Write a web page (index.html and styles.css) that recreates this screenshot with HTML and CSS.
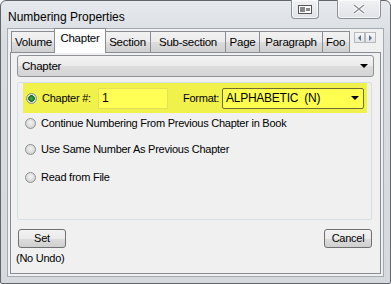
FILE: index.html
```html
<!DOCTYPE html>
<html lang="en">
<head>
  <meta charset="UTF-8">
  <title>Numbering Properties</title>
  <link rel="stylesheet" href="styles.css">
</head>
<body>
  <div class="window">
    <div class="titlebar">
      <span class="title">Numbering Properties</span>
      <div class="caption-btns">
        <div class="cap-btn cap-small">
          <svg width="14" height="9" viewBox="0 0 14 9">
            <rect x="0.5" y="0.5" width="13" height="8" fill="#fff" stroke="#555"/>
            <rect x="2" y="2" width="5" height="5" fill="#888"/>
            <rect x="8" y="3" width="4" height="3" fill="#888"/>
          </svg>
        </div>
        <div class="cap-btn cap-close">
          <svg width="12" height="10" viewBox="0 0 12 10">
            <path d="M1 1 L11 9 M11 1 L1 9" stroke="#fff" stroke-width="3.2"/>
            <path d="M1 1 L11 9 M11 1 L1 9" stroke="#8a8d91" stroke-width="1.4"/>
          </svg>
        </div>
      </div>
    </div>

    <div class="client">
      <div class="tabs">
        <div class="tab" style="width: 45px">Volume</div>
        <div class="tab active" style="width: 46px">Chapter</div>
        <div class="tab" style="width: 47px">Section</div>
        <div class="tab" style="width: 76px">Sub-section</div>
        <div class="tab" style="width: 35px">Page</div>
        <div class="tab" style="width: 64px">Paragraph</div>
        <div class="tab tab-cut" style="width: 28px">Foo</div>
        <div class="tab-arrows">
          <div class="arrow-btn"><span class="tri-left"></span></div>
          <div class="arrow-btn"><span class="tri-right"></span></div>
        </div>
      </div>

      <div class="panel">
        <div class="combo">
          <span>Chapter</span>
          <span class="caret"></span>
        </div>

        <div class="group">
          <div class="highlight">
            <span class="radio checked"></span>
            <span class="label chapter-label">Chapter #:</span>
            <div class="num-input">1</div>
            <span class="format-label">Format:</span>
            <div class="format-select">
              <span>ALPHABETIC&nbsp;&nbsp;(N)</span>
              <span class="caret"></span>
            </div>
          </div>

          <div class="option first">
            <span class="radio"></span>
            <span class="label">Continue Numbering From Previous Chapter in Book</span>
          </div>
          <div class="option second">
            <span class="radio"></span>
            <span class="label">Use Same Number As Previous Chapter</span>
          </div>
          <div class="option third">
            <span class="radio"></span>
            <span class="label">Read from File</span>
          </div>
        </div>

        <div class="footer">
          <div class="set-col">
            <div class="btn">Set</div>
            <div class="note">(No Undo)</div>
          </div>
          <div class="btn">Cancel</div>
        </div>
      </div>
    </div>
  </div>
</body>
</html>
```

FILE: styles.css
```css
body {
  margin: 0;
  background: #ffffff;
  font-family: 'Liberation Sans', Arial, sans-serif;
  font-size: 11px;
  letter-spacing: -0.25px;
  color: #000;
}

.window {
  width: 391px;
  height: 284px;
  box-sizing: border-box;
  border: 1px solid #62666b;
  border-radius: 6px 6px 2px 2px;
  background: linear-gradient(to bottom, #e6e9ed, #d9dde2 40px, #d6dade);
  padding: 0 6px 6px 6px;
  display: flex;
  flex-direction: column;
}

.titlebar {
  height: 27px;
  display: flex;
  align-items: flex-start;
  justify-content: space-between;
}

.title {
  font-size: 12px;
  letter-spacing: 0;
  margin: 9px 0 0 1px;
  color: #000;
}

.caption-btns {
  display: flex;
  gap: 18px;
  margin-right: 3px;
  margin-top: -1px;
}

.cap-btn {
  height: 19px;
  box-sizing: border-box;
  border: 1px solid #8d9196;
  border-top: none;
  border-radius: 0 0 4px 4px;
  background: linear-gradient(to bottom, #f1f2f4, #dfe2e6);
  box-shadow: inset 0 0 0 1px rgba(255, 255, 255, 0.7);
  display: flex;
  align-items: center;
  justify-content: center;
}

.cap-small {
  width: 28px;
}

.cap-close {
  width: 44px;
}

.client {
  flex: 1;
  border: 1px solid #a4aab1;
  background: #f0f0f0;
  padding: 0 2px 2px 2px;
  display: flex;
  flex-direction: column;
}

.tabs {
  display: flex;
  align-items: flex-end;
  height: 23px;
  padding-left: 1px;
  position: relative;
}

.tab {
  height: 21px;
  box-sizing: border-box;
  border: 1px solid #898c95;
  border-bottom: none;
  margin-right: -1px;
  background: linear-gradient(to bottom, #f2f2f2, #ebebeb 50%, #dddddd 51%, #cfcfcf);
  text-align: center;
  line-height: 20px;
  font-size: 11.5px;
  white-space: nowrap;
  overflow: hidden;
}

.tab.active {
  height: 24px;
  margin-left: -1px;
  margin-right: -2px;
  padding: 0 2px;
  background: #ffffff;
  position: relative;
  z-index: 1;
  line-height: 19px;
  margin-bottom: -1px;
  box-sizing: content-box;
}

.tab-cut {
  text-align: left;
  padding-left: 3px;
}

.tab-arrows {
  position: absolute;
  left: 344px;
  top: 3px;
  display: flex;
}

.arrow-btn {
  width: 11px;
  height: 11px;
  box-sizing: border-box;
  border: 1px solid #b6b9be;
  background: linear-gradient(to bottom, #f7f7f7, #e2e4e7);
  display: flex;
  align-items: center;
  justify-content: center;
}

.tri-left {
  border-top: 3px solid transparent;
  border-bottom: 3px solid transparent;
  border-right: 3px solid #5a6f8c;
}

.tri-right {
  border-top: 3px solid transparent;
  border-bottom: 3px solid transparent;
  border-left: 3px solid #5a6f8c;
}

.panel {
  flex: 1;
  border: 1px solid #898c95;
  background: #f0f0f0;
  padding: 2px 8px 0 6px;
  display: flex;
  flex-direction: column;
}

.combo {
  height: 22px;
  box-sizing: border-box;
  border: 1px solid #8f9296;
  border-radius: 3px;
  background: linear-gradient(to bottom, #f3f3f3, #ebebeb 50%, #dddddd 51%, #d3d3d3);
  display: flex;
  align-items: center;
  justify-content: space-between;
  padding: 0 5px 0 4px;
  font-size: 11.5px;
  margin-right: -2px;
}

.caret {
  width: 0;
  height: 0;
  border-left: 4px solid transparent;
  border-right: 4px solid transparent;
  border-top: 4px solid #000;
}

.group {
  margin-top: 5px;
  height: 138px;
  box-sizing: border-box;
  border: 1px solid #d5dfe5;
  border-radius: 2px;
  padding: 0 4px 0 5px;
}

.highlight {
  height: 30px;
  background: #f1f14b;
  display: flex;
  align-items: center;
  padding-left: 3px;
}

.radio {
  width: 11px;
  height: 11px;
  box-sizing: border-box;
  border-radius: 50%;
  border: 1px solid #8e8f8f;
  background: radial-gradient(circle at 50% 40%, #f4f4f4, #d5d5d5 70%, #bcbcbc);
  flex-shrink: 0;
}

.radio.checked {
  background: radial-gradient(circle, #4fb34f 0, #0f6e1a 3px, #e0e0e0 3.6px, #c8c8c8);
}

.label {
  margin-left: 5px;
  white-space: nowrap;
}

.chapter-label {
  width: 51px;
  flex-shrink: 0;
}

.num-input {
  width: 70px;
  height: 21px;
  box-sizing: border-box;
  margin-left: 5px;
  border: 1px solid #e2e25a;
  background: #ffff55;
  font-size: 12px;
  padding: 2px 0 0 3px;
  flex-shrink: 0;
}

.format-label {
  margin-left: 15px;
  width: 35px;
  white-space: nowrap;
  flex-shrink: 0;
}

.format-select {
  width: 142px;
  height: 21px;
  box-sizing: border-box;
  margin-left: 4px;
  border: 1px solid #6f6d32;
  border-radius: 2px;
  background: #ffff50;
  display: flex;
  align-items: center;
  justify-content: space-between;
  padding: 0 4px 0 3px;
  font-size: 12px;
  flex-shrink: 0;
}

.option {
  display: flex;
  align-items: center;
  height: 14px;
  padding-left: 2px;
}

.option.first {
  margin-top: 3px;
}

.option.second {
  margin-top: 12px;
}

.option.third {
  margin-top: 14px;
}

.footer {
  display: flex;
  justify-content: space-between;
  align-items: flex-start;
  margin-top: 9px;
  padding-left: 1px;
}

.btn {
  width: 48px;
  height: 19px;
  box-sizing: border-box;
  border: 1px solid #707070;
  border-radius: 3px;
  background: linear-gradient(to bottom, #f2f2f2, #ebebeb 50%, #dddddd 51%, #cfcfcf);
  text-align: center;
  line-height: 17px;
}

.note {
  margin-top: 4px;
  margin-left: -2px;
}
```
